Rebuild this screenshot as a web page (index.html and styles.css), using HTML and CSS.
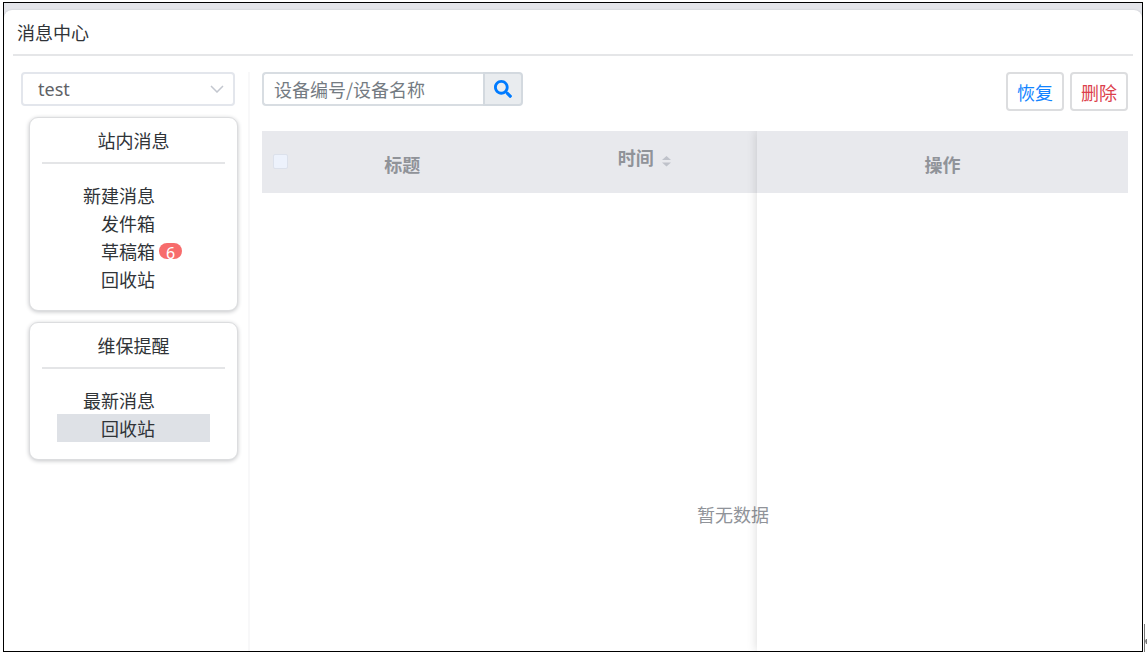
FILE: index.html
```html
<!DOCTYPE html>
<html lang="zh-CN">
<head>
<meta charset="utf-8">
<title>消息中心</title>
<link rel="stylesheet" href="styles.css">
</head>
<body>
<div class="frame">
  <div class="panel">
    <header class="panel-header"><h1 class="panel-title">消息中心</h1></header>
    <div class="columns">
      <aside class="sidebar">
        <div class="select-box">
          <select class="select" aria-label="用户"><option>test</option></select>
          <svg class="select-arrow" viewBox="0 0 14 8" aria-hidden="true"><path d="M1 1l6 6 6-6"/></svg>
        </div>
        <section class="card">
          <h2 class="card-title">站内消息</h2>
          <ul class="menu">
            <li><a class="menu-item" href="#new">新建消息</a></li>
            <li><a class="menu-item menu-sub" href="#outbox">发件箱</a></li>
            <li><a class="menu-item menu-sub" href="#drafts">草稿箱<span class="badge">6</span></a></li>
            <li><a class="menu-item menu-sub" href="#recycle">回收站</a></li>
          </ul>
        </section>
        <section class="card">
          <h2 class="card-title">维保提醒</h2>
          <ul class="menu">
            <li><a class="menu-item" href="#latest">最新消息</a></li>
            <li><a class="menu-item menu-sub active" href="#care-recycle">回收站</a></li>
          </ul>
        </section>
      </aside>
      <main class="main">
        <div class="toolbar">
          <form class="search">
            <input class="search-input" type="text" placeholder="设备编号/设备名称" aria-label="设备编号/设备名称">
            <button class="search-button" type="button" aria-label="搜索">
              <svg class="search-icon" viewBox="0 0 512 512" aria-hidden="true"><path d="M505 442.700L405.300 343c-4.500-4.500-10.600-7-17-7H372c27.600-35.300 44-79.700 44-128C416 93.100 322.900 0 208 0S0 93.100 0 208s93.100 208 208 208c48.300 0 92.700-16.400 128-44v16.300c0 6.400 2.500 12.500 7 17l99.700 99.700c9.400 9.400 24.600 9.400 33.900 0l28.300-28.300c9.400-9.400 9.400-24.600.1-34zM208 336c-70.700 0-128-57.200-128-128 0-70.700 57.200-128 128-128 70.700 0 128 57.200 128 128 0 70.700-57.200 128-128 128z"/></svg>
            </button>
          </form>
          <div class="actions">
            <button class="button restore" type="button">恢复</button>
            <button class="button delete" type="button">删除</button>
          </div>
        </div>
        <div class="table-area">
          <table class="table">
            <colgroup><col class="col-check"><col class="col-title"><col class="col-time"><col class="col-action"></colgroup>
            <thead>
              <tr>
                <th class="check-cell"><input class="check" type="checkbox" aria-label="全选" disabled></th>
                <th>标题</th>
                <th class="time-cell">时间<svg class="sort" viewBox="0 0 9 12" aria-hidden="true"><path d="M0 5L4.500 1 9 5zM0 7.500L4.500 11.500 9 7.500z"/></svg></th>
                <th>操作</th>
              </tr>
            </thead>
            <tbody><tr><td class="empty" colspan="4">暂无数据</td></tr></tbody>
          </table>
        </div>
      </main>
    </div>
  </div>
</div>
<svg class="caret" viewBox="0 0 3 28" aria-hidden="true"><path d="M0 0h1v28H0zM1 17l1-2h1v5H2z"/></svg>
</body>
</html>
```
FILE: styles.css
```css
* { box-sizing: border-box; }

body {
  margin: 0;
  padding: 2px 4px 4px 3px;
  min-height: 100vh;
  display: flex;
  background: #fff;
  color: #303438;
  font: 18px/28px "Noto Sans CJK SC", "Noto Sans", sans-serif;
}

h1, h2, ul, form { margin: 0; padding: 0; }

button, input, select { font: inherit; margin: 0; }

.frame {
  flex: 1;
  min-width: 0;
  display: flex;
  padding-top: 7px;
  border: 1px solid #000;
  background: #e4e5ea;
  overflow: hidden;
}

.panel {
  flex: 1;
  min-width: 0;
  display: flex;
  flex-direction: column;
  padding: 0 9px;
  border-radius: 8px 8px 0 0;
  background: #fff;
  box-shadow: 0 0 2px #bfc1c6;
}

.panel-header {
  padding: 8px 4px;
  border-bottom: 2px solid #e5e6e8;
}

.panel-title { font-size: 18px; font-weight: 400; }

.columns { flex: 1; display: flex; padding-top: 16px; }

.sidebar {
  width: 237px;
  padding: 0 13px 0 8px;
  border-right: 2px solid #f8f8f9;
}

.select-box { position: relative; display: flex; }

.select {
  flex: 1;
  height: 34px;
  padding: 0 30px 0 15px;
  border: 2px solid #e3e6ec;
  border-radius: 4px;
  background: #fff;
  color: #606266;
  font-family: "Noto Sans", sans-serif;
  appearance: none;
}

.select-arrow {
  position: absolute;
  top: 13px;
  right: 11px;
  width: 14px;
  height: 8px;
  fill: none;
  stroke: #c3c7cf;
  stroke-width: 1.5;
  pointer-events: none;
}

.card {
  width: 209px;
  margin: 11px 0 0 8px;
  padding: 8px 12px 17px;
  border: 1px solid #dcdddf;
  border-radius: 9px;
  background: #fff;
  box-shadow: 0 1px 4px #c4c5c8;
}

.card-title {
  padding-bottom: 8px;
  border-bottom: 2px solid #e4e5e7;
  font-size: 18px;
  font-weight: 400;
  text-align: center;
}

.menu { margin-top: 17px; padding: 0 15px; list-style: none; }

.menu-item {
  display: flex;
  align-items: center;
  padding-left: 26px;
  color: inherit;
  text-decoration: none;
}

.menu-sub { padding-left: 44px; }

.active { background: #dee1e6; }

.badge {
  width: 23px;
  height: 16px;
  margin-left: 4px;
  border-radius: 8px;
  background: #f76c6c;
  color: #fff;
  font: 16px/20px "Noto Sans", sans-serif;
  text-align: center;
}

.main {
  flex: 1;
  min-width: 0;
  display: flex;
  flex-direction: column;
  padding: 0 5px 0 12px;
}

.toolbar { display: flex; justify-content: space-between; }

.search { display: flex; width: 261px; height: 34px; }

.search-input {
  flex: 1;
  min-width: 0;
  padding: 0 10px;
  border: 2px solid #d8dde2;
  border-right: 0;
  border-radius: 4px 0 0 4px;
  background: #fff;
  color: #495057;
}

.search-input::placeholder { color: #747b82; opacity: 1; }

.search-button {
  display: flex;
  align-items: center;
  justify-content: center;
  width: 40px;
  padding: 0;
  border: 2px solid #d3d9df;
  border-radius: 0 4px 4px 0;
  background: #e9ecef;
}

.search-icon { width: 18px; height: 18px; fill: #007bff; }

.actions { display: flex; gap: 6px; }

.button {
  width: 58px;
  height: 39px;
  padding: 0;
  border: 2px solid #dcdddf;
  border-radius: 4px;
  background: #fff;
}

.restore { color: #1284ff; }

.delete { color: #dc3f4c; }

.table-area {
  position: relative;
  flex: 1;
  margin-top: 20px;
}

.table-area::after {
  content: "";
  position: absolute;
  top: 0;
  right: 0;
  bottom: 0;
  width: 371px;
  box-shadow: 0 0 10px #00000028;
  clip-path: inset(0 0 0 -12px);
  pointer-events: none;
}

.table {
  width: 100%;
  border-collapse: collapse;
  table-layout: fixed;
  color: #909399;
}

.col-check { width: 45px; }
.col-title { width: 22%; }
.col-action { width: 371px; }

.table th {
  height: 62px;
  padding: 4px 0 0;
  background: #e8e9ed;
  text-align: center;
  font-weight: 700;
}

.table .check-cell { padding: 0 0 2px 11px; text-align: left; }

.check {
  display: block;
  width: 15px;
  height: 15px;
  border: 1px solid #dce1eb;
  border-radius: 2px;
  background: #edf2fc;
  appearance: none;
}

.table .time-cell { padding: 0 0 10px 34px; }

.sort {
  width: 9px;
  height: 12px;
  margin-left: 8px;
  vertical-align: -2px;
  fill: #bfc2ca;
}

.table .empty { padding: 307px 0 0 76px; text-align: center; }

.caret {
  position: absolute;
  right: 0;
  bottom: 4px;
  width: 3px;
  height: 28px;
  fill: #777;
}
```
